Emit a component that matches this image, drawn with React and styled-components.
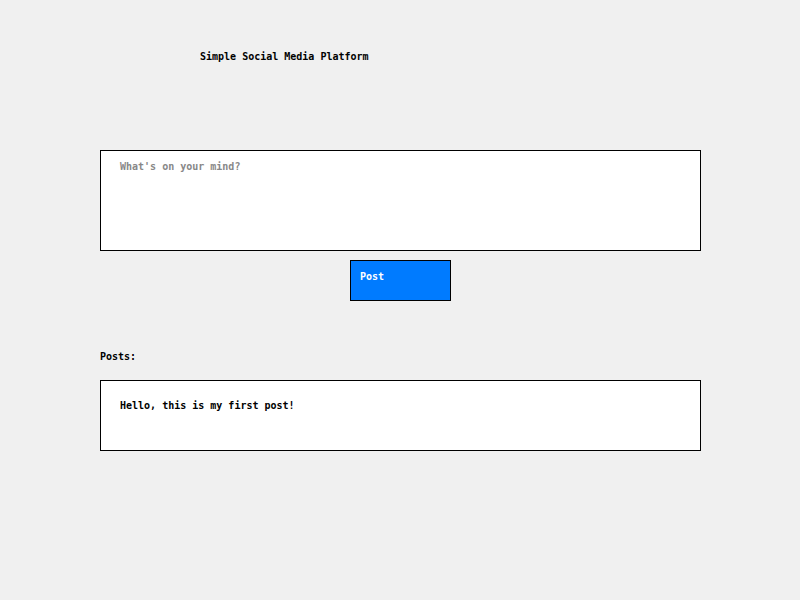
import React, { useState } from 'react';
import styled, { createGlobalStyle } from 'styled-components';

const Global = createGlobalStyle`
  body {
    margin: 0;
    background: #f0f0f0;
    font-family: "DejaVu Sans Mono", "Liberation Mono", monospace;
    font-weight: bold;
    font-size: 10px;
    line-height: 12px;
  }
`;

const Page = styled.div`
  padding: 51px 100px 0;
  width: 601px;
`;

const Title = styled.h1`
  margin: 0 0 0 100px;
  font-size: 10px;
  line-height: 12px;
  color: #000;
`;

const Composer = styled.textarea`
  display: block;
  margin-top: 87px;
  width: 601px;
  height: 101px;
  box-sizing: border-box;
  padding: 10px 19px;
  border: 1px solid #000;
  background: #fff;
  resize: none;
  font: inherit;
  color: #000;
  outline: none;
  &::placeholder { color: #888; }
`;

const PostButton = styled.button`
  display: flex;
  align-items: flex-start;
  margin: 9px auto 0;
  width: 101px;
  height: 41px;
  box-sizing: border-box;
  padding: 10px 9px;
  border: 1px solid #000;
  background: #007bff;
  color: #fff;
  font: inherit;
`;

const Label = styled.h2`
  margin: 50px 0 0;
  font-size: 10px;
  line-height: 12px;
`;

const Card = styled.div`
  margin-top: 17px;
  height: 71px;
  box-sizing: border-box;
  padding: 19px 19px;
  border: 1px solid #000;
  background: #fff;
`;

export default function App() {
  let [text, setText] = useState('');
  let [posts, setPosts] = useState(['Hello, this is my first post!']);

  return (
    <Page>
      <Global />
      <Title>Simple Social Media Platform</Title>
      <Composer placeholder="What's on your mind?" value={text} onChange={e => setText(e.target.value)} />
      <PostButton onClick={() => { if (text) { setPosts([text, ...posts]); setText(''); } }}>Post</PostButton>
      <Label>Posts:</Label>
      {posts.map((p, i) => <Card key={i}>{p}</Card>)}
    </Page>
  );
}
